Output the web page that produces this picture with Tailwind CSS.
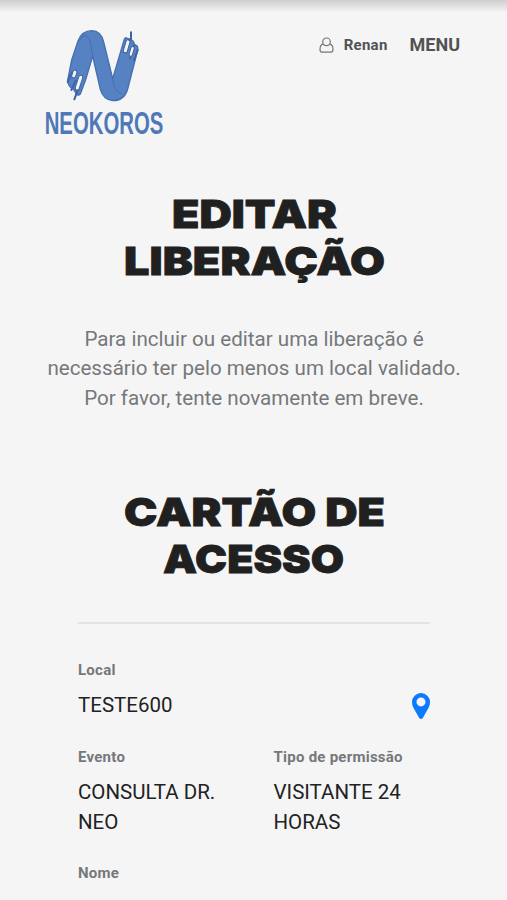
<!DOCTYPE html>
<html lang="pt-BR">
<head>
<meta charset="utf-8">
<meta name="viewport" content="width=device-width, initial-scale=1">
<title>Editar Liberação</title>
<script src="https://cdn.jsdelivr.net/npm/@tailwindcss/browser@4"></script>
</head>
<body class="h-[900px] overflow-hidden bg-[#f5f5f5] font-['Roboto',sans-serif] text-[#212223]">
<div class="h-3 bg-linear-to-b from-[#cfcfcf] via-[#d8d8d8] via-30% to-[#f5f5f5]"></div>
<header class="flex h-[133px] items-start justify-between pl-[35px] pr-[47px] pt-2">
  <svg class="h-[125px] w-[140px] overflow-visible" viewBox="0 0 420 375" role="img" aria-label="Neokoros">
    <g fill="#5682c4" stroke="#456fae" stroke-width="4" stroke-linejoin="round">
      <path d="M110 120L129 63Q141 32 170 32Q199 33 206 66L233 176L266 64Q270 49 276 55L285 58Q298 62 298 74Q311 76 308 91L278 207Q268 242 234 242Q205 240 196 208L173 108L153 176L136 222Q130 228 124 222L116 208Q98 200 98 181Z"/>
      <path d="M131 65Q153 28 166 65L173 108M233 176Q236 212 258 222" fill="none" stroke-width="3"/>
    </g>
    <g fill="none" stroke="#3d65a3" stroke-width="6" stroke-linecap="round">
      <path d="M288 37V58M282 58L270 94M298 74L285 116M308 90L297 121M111 157L98 186M122 182L109 210M136 191L118 238"/>
    </g>
    <g fill="#f5f5f5" stroke="#3d65a3" stroke-width="3">
      <rect x="-6" y="-20" width="12" height="40" rx="6" transform="translate(275 79) rotate(16)"/>
      <rect x="-5" y="-15" width="10" height="30" rx="5" transform="translate(290 94) rotate(16)"/>
      <rect x="-6" y="-12" width="12" height="24" rx="6" transform="translate(118 162) rotate(18)"/>
      <rect x="-6" y="-23" width="12" height="46" rx="6" transform="translate(132 188) rotate(18)"/>
    </g>
    <text x="29" y="343" textLength="356" lengthAdjust="spacingAndGlyphs" class="fill-[#4e78b8] font-['Liberation_Sans',sans-serif] text-[92px] font-bold">NEOKOROS</text>
  </svg>
  <nav class="flex items-center pt-[13px] font-bold text-[#515253]">
    <svg class="mr-[10px] h-4 w-[15px]" viewBox="0 0 15 16" fill="none" stroke="#777" stroke-width="1.2"><circle cx="7.5" cy="4.8" r="3.8"/><path d="M4.2 7.1C1.8 7.5 1 10 1 12.4Q1 15.2 3.5 15.2H11.5Q14 15.2 14 12.4C14 10 13.2 7.5 10.8 7.1"/></svg>
    <span class="mr-[22px] text-[15px] tracking-[.25px]">Renan</span>
    <span class="text-[18px] leading-6">MENU</span>
  </nav>
</header>
<main>
  <section class="h-[335px]">
    <h1 class="pt-[35px]">
      <svg class="mx-auto block h-[120px] w-[300px] overflow-visible fill-[#202020] stroke-[#202020] font-['Inter',sans-serif] text-[39px] font-black" viewBox="104 180 300 120" stroke-width=".8">
        <text x="172" y="228" textLength="165" lengthAdjust="spacingAndGlyphs">EDITAR</text>
        <text x="124" y="275" textLength="261" lengthAdjust="spacingAndGlyphs">LIBERAÇÃO</text>
      </svg>
    </h1>
    <p class="mt-[25px] pl-px text-center text-[20.6px] leading-[29.3px] text-[#75787b]">Para incluir ou editar uma liberação é<br>necessário ter pelo menos um local validado.<br>Por favor, tente novamente em breve.</p>
  </section>
  <section class="pl-[78px] pr-[77px]">
    <h2>
      <svg class="mx-auto block h-[120px] w-[300px] overflow-visible fill-[#202020] stroke-[#202020] font-['Inter',sans-serif] text-[39px] font-black" viewBox="104 480 300 120" stroke-width=".8">
        <text x="124" y="526" textLength="261" lengthAdjust="spacingAndGlyphs">CARTÃO DE</text>
        <text x="163" y="573" textLength="181" lengthAdjust="spacingAndGlyphs">ACESSO</text>
      </svg>
    </h2>
    <hr class="mt-[22px] border-0 border-t-2 border-[#e2e3e3]">
    <dl class="mt-[35px] grid grid-cols-2">
      <div class="col-span-2 h-[87px]">
        <dt class="text-[15px] font-bold leading-[22px] tracking-[.25px] text-[#75787b]">Local</dt>
        <dd class="mt-[10px] flex items-center justify-between text-[20.5px] leading-[29.5px]">TESTE600
          <svg class="h-[26px] w-[18px]" viewBox="0 0 18 26"><path fill="#0a7bff" fill-rule="evenodd" d="M9 0A9 9 0 0 0 0 9Q0 12 1.3 14.6L7.2 25Q9 27 10.8 25L16.7 14.6Q18 12 18 9A9 9 0 0 0 9 0ZM9 4.4A4.5 4.5 0 1 1 9 13.4A4.5 4.5 0 1 1 9 4.4Z"/></svg>
        </dd>
      </div>
      <div class="h-[116px]">
        <dt class="text-[15px] font-bold leading-[22px] tracking-[.25px] text-[#75787b]">Evento</dt>
        <dd class="mt-[10px] text-[20.5px] leading-[29.5px]">CONSULTA DR.<br>NEO</dd>
      </div>
      <div class="h-[116px] pl-[19.5px]">
        <dt class="text-[15px] font-bold leading-[22px] tracking-[.25px] text-[#75787b]">Tipo de permissão</dt>
        <dd class="mt-[10px] text-[20.5px] leading-[29.5px]">VISITANTE 24<br>HORAS</dd>
      </div>
      <div class="col-span-2">
        <dt class="text-[15px] font-bold leading-[22px] tracking-[.25px] text-[#75787b]">Nome</dt>
      </div>
    </dl>
  </section>
</main>
</body>
</html>
